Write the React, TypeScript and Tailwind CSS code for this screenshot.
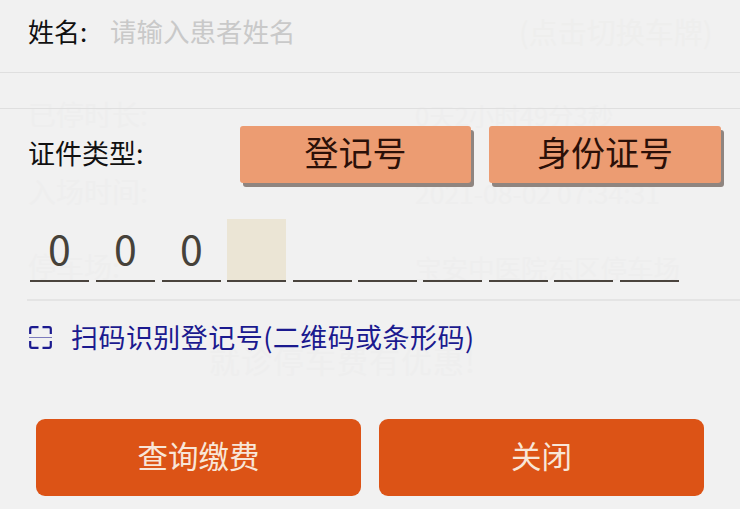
const CJK = "font-['Noto_Sans_CJK_SC','Noto_Sans',sans-serif]";

const cells = ["0", "0", "0", "", "", "", "", "", "", ""];
const cellX = [0, 66, 132, 197, 263, 328, 393, 459, 524, 590];

function Ghost() {
  return (
    <div className="absolute inset-0 text-[#eeeeee] text-[28px] leading-none">
      <span className="absolute left-[519px] top-[17px] text-[29px] text-[#eeeeed]">(点击切换车牌)</span>
      <span className="absolute left-[28px] top-[100px]">已停时长:</span>
      <span className="absolute left-[415px] top-[102px] text-[25.5px]">0天2小时49分3秒</span>
      <span className="absolute left-[28px] top-[177px]">入场时间:</span>
      <span className="absolute left-[415px] top-[180px] text-[26.5px]">2021-08-02 07:34:31</span>
      <span className="absolute left-[28px] top-[252px]">停车场:</span>
      <span className="absolute left-[415px] top-[255px] text-[26.5px]">宝安中医院东区停车场</span>
      <span className="absolute left-[209px] top-[344px] text-[31px] tracking-[1px]">就诊停车费有优惠!</span>
    </div>
  );
}

export default function App() {
  return (
    <div className={`relative w-[740px] h-[509px] overflow-hidden bg-[#f1f1f1] ${CJK}`}>
      <Ghost />
      <div className="relative flex flex-col">
        <div className="h-[73px] border-b border-[#dfdfdf] flex items-start pl-[28px] pt-[14px] text-[26px] leading-[34px]">
          <span className="text-[#111] w-[82px]">姓名:</span>
          <span className="text-[#c9c9c9] text-[26.5px]">请输入患者姓名</span>
        </div>
        <div className="h-[36px] border-b border-[#dfdfdf]" />
        <div className="flex items-center h-[58px] mt-[16px] pl-[28px]">
          <span className="w-[212px] text-[27px] text-[#111] leading-[34px] pb-[2px]">证件类型:</span>
          <div className="flex gap-[18px]">
            <button className="w-[231px] h-[57px] rounded-[3px] bg-[#ec9c72] pb-[5px] text-[34px] text-[#2b1008] shadow-[3px_4px_0_#8f8580]">登记号</button>
            <button className="w-[232px] h-[57px] rounded-[3px] bg-[#ec9c72] pb-[5px] text-[34px] text-[#2b1008] shadow-[3px_4px_0_#8f8580]">身份证号</button>
          </div>
        </div>
        <div className="relative h-[63px] mt-[36px] ml-[30px]">
          {cells.map((c, i) => (
            <div
              key={i}
              style={{ left: cellX[i] }}
              className={`absolute top-0 w-[59px] h-[63px] border-b-2 border-[#4a443d] flex items-center justify-center pb-[4px] text-[41px] leading-none text-[#46423a] ${i === 3 ? "bg-[#ebe5d5]" : ""}`}
            >
              {c}
            </div>
          ))}
        </div>
        <div className="h-[2px] mt-[17px] ml-[27px] bg-[#e4e4e4]" />
        <div className="flex items-center gap-[19px] mt-[18px] pl-[29px] text-[#1b1a8f] text-[27px] tracking-[0.45px] leading-[36px]">
          <svg width="23" height="23" viewBox="0 0 23 23" fill="none" stroke="#1b1a8f" strokeWidth="2.2">
            <path d="M9.5 1.2H3Q1.2 1.2 1.2 3V8M13.5 1.2H20Q21.8 1.2 21.8 3V8M1.2 15V20Q1.2 21.8 3 21.8H9.5M21.8 15V20Q21.8 21.8 20 21.8H13.5" />
            <path d="M0 11.5H23" strokeWidth="1" opacity="0.55" />
          </svg>
          <span>扫码识别登记号(二维码或条形码)</span>
        </div>
        <div className="flex gap-[18px] ml-[36px] mt-[64px]">
          <button className="w-[325px] h-[77px] rounded-[9px] bg-[#dc5316] pb-[3px] text-[#f8e6d8] text-[30.5px]">查询缴费</button>
          <button className="w-[325px] h-[77px] rounded-[9px] bg-[#dc5316] pb-[3px] text-[#f8e6d8] text-[30.5px]">关闭</button>
        </div>
      </div>
    </div>
  );
}
